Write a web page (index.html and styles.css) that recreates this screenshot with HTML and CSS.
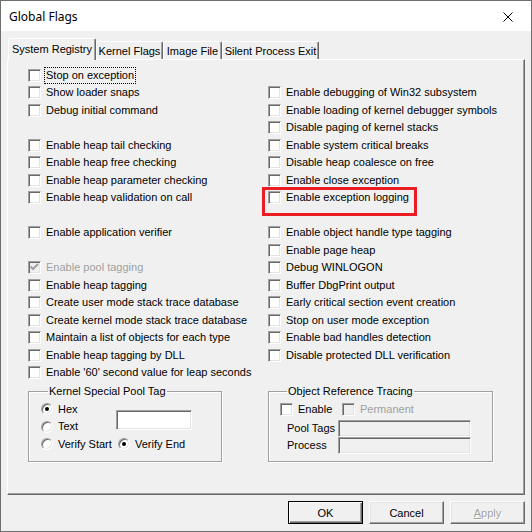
FILE: index.html
```html
<!DOCTYPE html>
<html>
<head>
<meta charset="utf-8">
<title>Global Flags</title>
<link rel="stylesheet" href="styles.css">
</head>
<body>
<div class="window">
  <div class="titlebar">
    <span class="title">Global Flags</span>
    <svg class="close" width="10" height="10" viewBox="0 0 10 10"><path d="M0.5 0.5L9.5 9.5M9.5 0.5L0.5 9.5" stroke="#000" stroke-width="1" fill="none"/></svg>
  </div>
  <div class="client">
    <div class="tabs">
      <div class="tab active t1">System Registry</div>
      <div class="tab t2">Kernel Flags</div>
      <div class="tab t3">Image File</div>
      <div class="tab t4">Silent Process Exit</div>
    </div>
    <div class="panel">
      <div class="cols">
        <div class="col left">
          <div class="row"><span class="cb"></span><span class="lbl focus">Stop on exception</span></div>
          <div class="row"><span class="cb"></span><span class="lbl">Show loader snaps</span></div>
          <div class="row"><span class="cb"></span><span class="lbl">Debug initial command</span></div>
          <div class="row"></div>
          <div class="row"><span class="cb"></span><span class="lbl">Enable heap tail checking</span></div>
          <div class="row"><span class="cb"></span><span class="lbl">Enable heap free checking</span></div>
          <div class="row"><span class="cb"></span><span class="lbl">Enable heap parameter checking</span></div>
          <div class="row"><span class="cb"></span><span class="lbl">Enable heap validation on call</span></div>
          <div class="row"></div>
          <div class="row"><span class="cb"></span><span class="lbl">Enable application verifier</span></div>
          <div class="row"></div>
          <div class="row"><span class="cb dis checked"><svg width="11" height="11" viewBox="0 0 11 11"><polyline points="1.5,4.5 4,7 9,2" fill="none" stroke="#a0a0a0" stroke-width="2"/></svg></span><span class="lbl dis">Enable pool tagging</span></div>
          <div class="row"><span class="cb"></span><span class="lbl">Enable heap tagging</span></div>
          <div class="row"><span class="cb"></span><span class="lbl">Create user mode stack trace database</span></div>
          <div class="row"><span class="cb"></span><span class="lbl">Create kernel mode stack trace database</span></div>
          <div class="row"><span class="cb"></span><span class="lbl">Maintain a list of objects for each type</span></div>
          <div class="row"><span class="cb"></span><span class="lbl">Enable heap tagging by DLL</span></div>
          <div class="row"><span class="cb"></span><span class="lbl">Enable '60' second value for leap seconds</span></div>
        </div>
        <div class="col right">
          <div class="row"></div>
          <div class="row"><span class="cb"></span><span class="lbl">Enable debugging of Win32 subsystem</span></div>
          <div class="row"><span class="cb"></span><span class="lbl">Enable loading of kernel debugger symbols</span></div>
          <div class="row"><span class="cb"></span><span class="lbl">Disable paging of kernel stacks</span></div>
          <div class="row"><span class="cb"></span><span class="lbl">Enable system critical breaks</span></div>
          <div class="row"><span class="cb"></span><span class="lbl">Disable heap coalesce on free</span></div>
          <div class="row"><span class="cb"></span><span class="lbl">Enable close exception</span></div>
          <div class="row mark"><span class="cb"></span><span class="lbl">Enable exception logging</span></div>
          <div class="row"></div>
          <div class="row"><span class="cb"></span><span class="lbl">Enable object handle type tagging</span></div>
          <div class="row"><span class="cb"></span><span class="lbl">Enable page heap</span></div>
          <div class="row"><span class="cb"></span><span class="lbl">Debug WINLOGON</span></div>
          <div class="row"><span class="cb"></span><span class="lbl">Buffer DbgPrint output</span></div>
          <div class="row"><span class="cb"></span><span class="lbl">Early critical section event creation</span></div>
          <div class="row"><span class="cb"></span><span class="lbl">Stop on user mode exception</span></div>
          <div class="row"><span class="cb"></span><span class="lbl">Enable bad handles detection</span></div>
          <div class="row"><span class="cb"></span><span class="lbl">Disable protected DLL verification</span></div>
          <div class="row"></div>
        </div>
      </div>
      <div class="groups">
        <fieldset class="group kernel">
          <legend>Kernel Special Pool Tag</legend>
          <div class="kgrid">
            <div class="row"><span class="rb on"></span><span class="lbl">Hex</span></div>
            <span class="edit tag"></span>
            <div class="row"><span class="rb"></span><span class="lbl">Text</span></div>
            <div class="row"><span class="rb"></span><span class="lbl">Verify Start</span></div>
            <div class="row vend"><span class="rb on"></span><span class="lbl">Verify End</span></div>
          </div>
        </fieldset>
        <fieldset class="group objref">
          <legend>Object Reference Tracing</legend>
          <div class="row">
            <span class="opt enable"><span class="cb"></span><span class="lbl">Enable</span></span>
            <span class="opt"><span class="cb dis"></span><span class="lbl dis">Permanent</span></span>
          </div>
          <div class="ogrid">
            <span class="olbl">Pool Tags</span><span class="edit dis"></span>
            <span class="olbl">Process</span><span class="edit dis"></span>
          </div>
        </fieldset>
      </div>
    </div>
    <div class="buttons">
      <div class="btn def">OK</div>
      <div class="btn">Cancel</div>
      <div class="btn dis"><span class="ul">A</span>pply</div>
    </div>
  </div>
</div>
</body>
</html>
```

FILE: styles.css
```css
* { box-sizing: border-box; }
html, body { margin: 0; padding: 0; }
body {
  width: 532px;
  height: 532px;
  font-family: "Liberation Sans", Arial, sans-serif;
  font-size: 11px;
  color: #000;
  background: #f0f0f0;
}
.window {
  width: 532px;
  height: 532px;
  border: 1px solid #6f6f6f;
  display: flex;
  flex-direction: column;
  background: #f0f0f0;
}
.titlebar {
  height: 30px;
  flex: none;
  background: #fff;
  display: flex;
  align-items: center;
  justify-content: space-between;
  padding: 0 18px 0 8px;
}
.title {
  font-family: "Noto Sans", "Open Sans", sans-serif;
  font-size: 12px;
  line-height: 16px;
  margin-top: 1px;
}
.close { display: block; margin-top: 1px; }

.client {
  flex: 1;
  display: flex;
  flex-direction: column;
  padding: 7px 6px 7px 6px;
}
.tabs {
  height: 21px;
  display: flex;
  align-items: flex-end;
  padding-left: 1px;
  flex: none;
}
.tab {
  height: 18px;
  display: flex;
  align-items: center;
  justify-content: center;
  background: #f0f0f0;
  border-top: 1px solid #fff;
  border-left: 1px solid #fff;
  border-right: 1px solid #696969;
  box-shadow: inset -1px 0 0 #a0a0a0;
  border-radius: 2px 2px 0 0;
  white-space: nowrap;
}
.tab.active {
  height: 22px;
  margin-bottom: -1px;
  padding-bottom: 2px;
  position: relative;
  z-index: 1;
}
.t1 { width: 88px; }
.t2 { width: 67px; }
.t3 { width: 59px; }
.t4 { width: 97px; }

.panel {
  flex: 1;
  border-top: 1px solid #fff;
  border-left: 1px solid #fff;
  border-right: 1px solid #696969;
  border-bottom: 1px solid #696969;
  box-shadow: inset -1px -1px 0 #a0a0a0;
  padding: 6.25px 0 0 20px;
}
.cols { display: flex; }
.col.left { width: 240px; }
.col.right { flex: 1; }
.row {
  height: 17.5px;
  display: flex;
  align-items: center;
  white-space: nowrap;
}
.lbl { line-height: 13px; }
.lbl.dis, .dis.lbl { color: #a0a0a0; }
.focus {
  outline: 1px dotted #000;
  outline-offset: 1px;
}
.row.mark { position: relative; }
.row.mark::after {
  content: "";
  position: absolute;
  left: -6px;
  top: -2px;
  width: 149px;
  height: 23px;
  border: 3px solid #ec1c24;
}

.cb {
  width: 13px;
  height: 13px;
  flex: none;
  margin-right: 5px;
  background: #fff;
  border: 1px solid;
  border-color: #a0a0a0 #fff #fff #a0a0a0;
  box-shadow: inset 1px 1px 0 #696969, inset -1px -1px 0 #e3e3e3;
  position: relative;
}
.cb.dis { background: #f0f0f0; }
.cb svg { position: absolute; left: 0; top: 0; }

.rb {
  width: 12px;
  height: 12px;
  flex: none;
  margin-right: 5px;
  border-radius: 50%;
  background: #fff;
  border: 1px solid;
  border-color: #a0a0a0 #fff #fff #a0a0a0;
  box-shadow: inset 1px 1px 0 #696969, inset -1px -1px 0 #e3e3e3;
  position: relative;
}
.rb.on::after {
  content: "";
  position: absolute;
  left: 3px;
  top: 3px;
  width: 4px;
  height: 4px;
  border-radius: 50%;
  background: #000;
}

.groups {
  display: flex;
  margin-top: 4px;
}
.group {
  margin: 0;
  padding: 2px 0 0 12px;
  border: 1px solid #a0a0a0;
  box-shadow: 1px 1px 0 #fff, inset 1px 1px 0 #fff;
  height: 77px;
  min-width: 0;
}
.group legend {
  padding: 0 1px;
  margin-left: 7px;
  line-height: 13px;
}
.group.kernel { width: 194px; }
.group.objref { width: 225px; margin-left: 46px; padding-left: 11px; }

.kgrid {
  display: grid;
  grid-template-columns: 75px 1fr;
  grid-auto-rows: 17.5px;
}
.kgrid .edit.tag {
  grid-column: 2;
  grid-row: 1 / span 2;
  width: 76px;
  height: 20px;
  margin-top: 10px;
}
.kgrid .vend { margin-left: 2px; }

.edit {
  display: block;
  background: #fff;
  border: 1px solid;
  border-color: #a0a0a0 #fff #fff #a0a0a0;
  box-shadow: inset 1px 1px 0 #696969, inset -1px -1px 0 #e3e3e3;
}
.edit.dis { background: #f0f0f0; }

.opt { display: flex; align-items: center; }
.opt.enable { width: 62px; }

.ogrid {
  display: grid;
  grid-template-columns: 51px 133px;
  grid-auto-rows: 17px;
  margin-top: 2px;
  padding-left: 7px;
}
.olbl { display: flex; align-items: center; line-height: 13px; }

.buttons {
  flex: none;
  display: flex;
  justify-content: flex-end;
  gap: 6px;
  margin-top: 6px;
}
.btn {
  width: 75px;
  height: 23px;
  display: flex;
  align-items: center;
  justify-content: center;
  border: 1px solid;
  border-color: #fff #696969 #696969 #fff;
  box-shadow: inset -1px -1px 0 #a0a0a0, inset 1px 1px 0 #e3e3e3;
}
.btn.def {
  border-color: #000;
  box-shadow: inset 1px 1px 0 #fff, inset -1px -1px 0 #696969, inset -2px -2px 0 #a0a0a0;
}
.btn.dis { color: #a0a0a0; text-shadow: 1px 1px 0 #fff; }
.ul { text-decoration: underline; }
```
